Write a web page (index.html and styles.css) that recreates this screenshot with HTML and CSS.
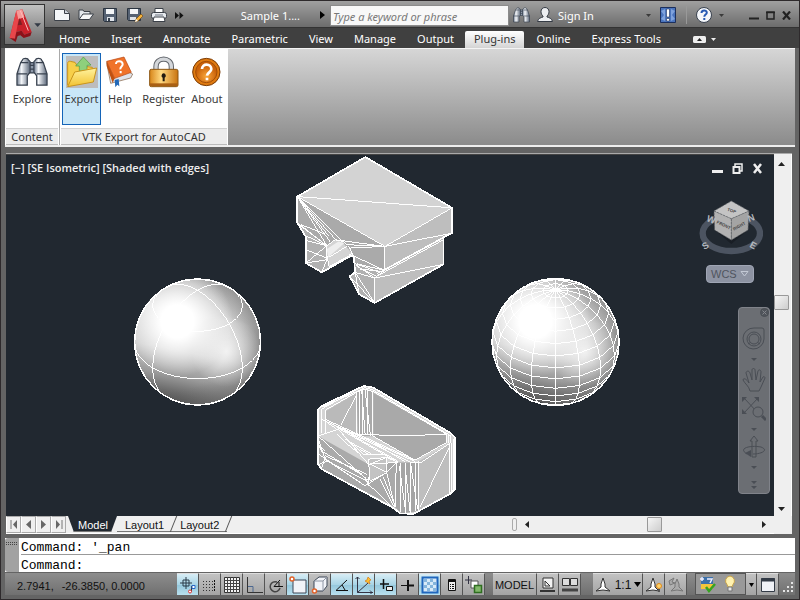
FILE: index.html
```html
<!DOCTYPE html>
<html lang="en">
<head>
    <meta charset="UTF-8">
    <meta name="viewport" content="width=device-width, initial-scale=1.0">
    <title>Sample 1</title>
    <link rel="stylesheet" href="styles.css">
</head>
<body>
<div class="app">

    <!-- Title bar and ribbon tabs -->
    <header class="header">
        <button class="app-button" aria-label="Application menu">
            <svg width="38" height="38" viewBox="0 0 114 114">
                <path d="M14 96 L34 14 L52 10 L80 78 L58 86 L50 74 L34 78 L30 98 Z" fill="#c9202a"/>
                <path d="M14 96 L34 14 L44 24 L30 98 Z" fill="#e8464a"/>
                <path d="M34 14 L52 10 L58 34 L40 40 Z" fill="#f59a98"/>
                <path d="M38 58 L44 36 L52 56 Z" fill="#7c2024"/>
                <path d="M14 96 L30 98 L34 78 L50 74 L58 86 L80 78 L76 90 L56 96 L46 88 L38 90 L32 108 Z" fill="#8c1119"/>
                <path d="M46 14 L70 74" stroke="#fbb" stroke-width="3"/>
                <path d="M88 52 h20 l-10 11z" fill="#333a45"/>
            </svg>
        </button>
        <div class="header-rows">
            <div class="titlebar">
                <div class="quick-access">
                    <button class="icon-btn" aria-label="New">
                        <svg width="16" height="16" viewBox="0 0 16 16"><path d="M.5 2.500h10l5 4v7H.5z" fill="#f4f6f8" stroke="#3b4048"/><path d="M10.500 2.500v4h5" fill="#cfd5dd" stroke="#3b4048"/></svg>
                    </button>
                    <button class="icon-btn" aria-label="Open">
                        <svg width="16" height="16" viewBox="0 0 16 16"><path d="M1 12V3h4l1 1.500h6V7" fill="#e3e7ec" stroke="#3b4048"/><path d="M1 12.500L5 7h10.500l-4 5.500z" fill="#f6f7f9" stroke="#3b4048"/></svg>
                    </button>
                    <button class="icon-btn" aria-label="Save">
                        <svg width="16" height="16" viewBox="0 0 16 16"><path d="M1.500 1.500h13v13h-12l-1-1z" fill="#566273" stroke="#2b3440"/><path d="M4 2h8v5H4z" fill="#f4f6f8"/><path d="M5 10h7v4H5z" fill="#dfe4ea"/><path d="M6 11h2v3H6z" fill="#39434f"/></svg>
                    </button>
                    <button class="icon-btn" aria-label="Save as">
                        <svg width="17" height="16" viewBox="0 0 17 16"><path d="M1.500 1.500h13v12h-12l-1-1z" fill="#566273" stroke="#2b3440"/><path d="M4 2h8v5H4z" fill="#f4f6f8"/><path d="M4 10h6v3H4z" fill="#dfe4ea"/><path d="M9 15l1-3 5-5 2 2-5 5z" fill="#f3b23e" stroke="#7a4d10" stroke-width=".7"/><path d="M9 15l1-3 2 2z" fill="#fff"/></svg>
                    </button>
                    <button class="icon-btn" aria-label="Plot">
                        <svg width="16" height="16" viewBox="0 0 16 16"><path d="M4 6V1.500h8V6" fill="#fff" stroke="#3b4048"/><rect x=".5" y="5.500" width="15" height="6" rx="2" fill="#e7eaee" stroke="#3b4048"/><path d="M3 10h10l1 4.500H2z" fill="#fff" stroke="#3b4048"/><path d="M4 8h8" stroke="#6c7480"/></svg>
                    </button>
                    <button class="icon-btn" aria-label="More">
                        <svg width="9" height="7" viewBox="0 0 9 7"><path d="M0 0l4 3.500L0 7zM4.500 0l4 3.500-4 3.500z" fill="#111"/></svg>
                    </button>
                </div>
                <span class="doc-title">Sample 1....</span>
                <svg class="title-arrow" width="5" height="8" viewBox="0 0 5 8"><path d="M0 0l5 4-5 4z" fill="#000"/></svg>
                <input class="search" type="text" aria-label="Search" placeholder="Type a keyword or phrase">
                <button class="icon-btn search-btn" aria-label="Find">
                    <svg width="17" height="16" viewBox="0 0 34 32"><use href="#binoculars"/></svg>
                </button>
                <button class="sign-in">
                    <svg width="16" height="16" viewBox="0 0 16 16"><path d="M8 .500c2.500 0 4 1.800 4 4.200 0 2-1 3.500-2 4.300v1c2 .5 5 1.500 5.500 4.500H.5C1 11.500 4 10.500 6 10V9C5 8.200 4 6.700 4 4.700 4 2.300 5.500.500 8 .500z" fill="#eceef1" stroke="#343a44"/></svg>
                    Sign In
                    <svg class="caret" width="5" height="3" viewBox="0 0 5 3"><path d="M0 0h5L2.500 3z" fill="#3a3a3a"/></svg>
                </button>
                <button class="icon-btn exchange" aria-label="Exchange">
                    <svg width="16" height="16" viewBox="0 0 16 16"><path d="M.5.500h15v15H.5z" fill="#4a74bd" stroke="#1c2f5d"/><path d="M1 4l4-2v12l-4-2 3-4zM15 4l-4-2v12l4-2-3-4z" fill="#7fa2dd"/><path d="M6.500 2h3v8h-3zM6.500 11.500h3V14h-3z" fill="#fff" stroke="#1c2f5d" stroke-width=".6"/></svg>
                </button>
                <span class="title-sep"></span>
                <button class="icon-btn help" aria-label="Help menu">
                    <svg width="29" height="16" viewBox="0 0 29 16"><circle cx="8" cy="8" r="7.500" fill="#f4f6fa" stroke="#39424f"/><path d="M5.500 6c0-3.500 5.300-3.300 5.300-.3 0 1.800-2.500 2-2.500 4M8.300 11v2" fill="none" stroke="#2759b3" stroke-width="2"/><path d="M23 7h5l-2.500 3z" fill="#3a3a3a"/></svg>
                </button>
                <div class="window-controls">
                    <button class="icon-btn" aria-label="Minimize"><svg width="10" height="9" viewBox="0 0 10 9"><path d="M0 7.500h10" stroke="#222" stroke-width="2"/></svg></button>
                    <button class="icon-btn" aria-label="Maximize"><svg width="9" height="9" viewBox="0 0 9 9"><path d="M1 8V1h7v7z M0 1.500h9" fill="none" stroke="#222" stroke-width="1.500"/></svg></button>
                    <button class="icon-btn" aria-label="Close"><svg width="9" height="9" viewBox="0 0 9 9"><path d="M1 .500l7 8M8 .500l-7 8" stroke="#222" stroke-width="2.200"/></svg></button>
                </div>
            </div>

            <nav class="tabs">
                <button class="tab">Home</button>
                <button class="tab">Insert</button>
                <button class="tab">Annotate</button>
                <button class="tab">Parametric</button>
                <button class="tab">View</button>
                <button class="tab">Manage</button>
                <button class="tab">Output</button>
                <button class="tab active">Plug-ins</button>
                <button class="tab">Online</button>
                <button class="tab">Express Tools</button>
                <button class="icon-btn ribbon-toggle" aria-label="Minimize ribbon">
                    <svg width="23" height="7" viewBox="0 0 23 7"><rect width="13" height="7" rx="1.500" fill="#eee"/><path d="M4 5l2.500-3L9 5z" fill="#222"/><path d="M18 2h5l-2.500 3z" fill="#eee"/></svg>
                </button>
            </nav>
        </div>
    </header>

    <!-- Ribbon -->
    <section class="ribbon">
        <div class="panel">
            <div class="panel-body">
                <button class="tool">
                    <svg width="32" height="32" viewBox="0 0 34 32">
                        <defs>
                            <linearGradient id="steel"><stop offset="0" stop-color="#6f7c90"/><stop offset=".35" stop-color="#f5f7fa"/><stop offset="1" stop-color="#5b6779"/></linearGradient>
                        </defs>
                        <g id="binoculars" stroke="#39424f" stroke-width="1.300">
                            <path d="M14 6h6v11h-6z" fill="#8c97a8"/>
                            <path d="M7 3c0-2 6-2 6 0l2 2v11l-3 4v10H1V18L5 6z" fill="url(#steel)"/>
                            <path d="M27 3c0-2-6-2-6 0l-2 2v11l3 4v10h11V18L29 6z" fill="url(#steel)"/>
                            <path d="M1 18h11M22 18h11M5 6h8M21 6h8M15 9h4M15 13h4" fill="none"/>
                        </g>
                    </svg>
                    <span>Explore</span>
                </button>
            </div>
            <div class="panel-title">Content</div>
        </div>
        <div class="panel wide">
            <div class="panel-body">
                <button class="tool selected">
                    <svg width="32" height="32" viewBox="0 0 96 96">
                        <defs><linearGradient id="folder" x2="0" y2="1"><stop offset="0" stop-color="#fff3a0"/><stop offset="1" stop-color="#f2c230"/></linearGradient></defs>
                        <path d="M0 0h96v96H0z" fill="#bdbdbd"/>
                        <path d="M5 88V22c0-5 4-7 8-6l14 3 6 9 46 6v14" fill="#f7cf49" stroke="#c9951c" stroke-width="3"/>
                        <path d="M52 3l23 24-12 1v17H40V30H29z" fill="#8ed07c" stroke="#4d9c42" stroke-width="2"/>
                        <path d="M5 92L26 48l66-12-10 42z" fill="url(#folder)" stroke="#c9951c" stroke-width="3"/>
                    </svg>
                    <span>Export</span>
                </button>
                <button class="tool">
                    <svg width="32" height="32" viewBox="0 0 96 96">
                        <path d="M8 20l12 62 60-16 6-12-8-4z" fill="#dfe3ea" stroke="#7d5a3c" stroke-width="2"/>
                        <path d="M8 16L60 3l22 46-50 18z" fill="#f0732a" stroke="#b3430f" stroke-width="2"/>
                        <path d="M8 16l24 51-6 14L8 30z" fill="#c2500f"/>
                        <path d="M36 24c0-12 20-11 20 1 0 7-8 6-7 15M50 45v7" stroke="#fff" stroke-width="6" fill="none"/>
                        <path d="M32 72l12-3 2 22-6-5-6 8z" fill="#2268b8"/>
                    </svg>
                    <span>Help</span>
                </button>
                <button class="tool">
                    <svg width="32" height="32" viewBox="0 0 96 96">
                        <defs><linearGradient id="gold"><stop offset="0" stop-color="#d8861a"/><stop offset=".4" stop-color="#ffd980"/><stop offset="1" stop-color="#c9730f"/></linearGradient></defs>
                        <path d="M24 44V32C24 2 70 2 70 32v12" fill="none" stroke="#63676d" stroke-width="16"/>
                        <path d="M24 44V32C24 2 70 2 70 32v12" fill="none" stroke="#d4d7db" stroke-width="10"/>
                        <rect x="5" y="40" width="85" height="52" rx="5" fill="url(#gold)" stroke="#8b5614" stroke-width="3"/>
                        <path d="M6 82h83v8H6z" fill="#a96014"/>
                        <path d="M47 52a7 7 0 0 1 3 13v11h-6V65a7 7 0 0 1 3-13z" fill="#221a10"/>
                    </svg>
                    <span>Register</span>
                </button>
                <button class="tool">
                    <svg width="32" height="32" viewBox="0 0 96 96">
                        <defs><radialGradient id="amber" cy=".7"><stop offset="0" stop-color="#f9a63a"/><stop offset="1" stop-color="#c9610a"/></radialGradient></defs>
                        <circle cx="46" cy="48" r="41" fill="#df7a10" stroke="#7a3c08" stroke-width="3"/>
                        <circle cx="46" cy="48" r="32" fill="url(#amber)" stroke="#a34e08" stroke-width="3"/>
                        <path d="M33 39c0-18 28-17 28 0 0 10-12 10-13 20M48 65v8" stroke="#fff" stroke-width="8" fill="none"/>
                    </svg>
                    <span>About</span>
                </button>
            </div>
            <div class="panel-title">VTK Export for AutoCAD</div>
        </div>
    </section>

    <!-- Drawing window -->
    <main class="workspace">
        <div class="viewport">
            <svg class="scene" viewBox="6 155 768 362">
                <defs>
                    <linearGradient id="ball" x1=".6" y1="0" x2=".4" y2="1">
                        <stop offset="0" stop-color="#a8a8a8"/><stop offset=".3" stop-color="#d6d6d6"/><stop offset=".6" stop-color="#c8c8c8"/><stop offset=".8" stop-color="#9a9a9a"/><stop offset="1" stop-color="#4c4c4c"/>
                    </linearGradient>
                    <radialGradient id="edge" cx=".32" cy=".45" r=".72">
                        <stop offset=".6" stop-color="#777" stop-opacity="0"/><stop offset=".95" stop-color="#6e6e6e" stop-opacity=".7"/>
                    </radialGradient>
                    <radialGradient id="shine" cx=".34" cy=".34" r=".44">
                        <stop offset=".3" stop-color="#fff"/><stop offset="1" stop-color="#fff" stop-opacity="0"/>
                    </radialGradient>
                    <radialGradient id="glow" cx=".73" cy=".58" r=".28">
                        <stop offset="0" stop-color="#fff" stop-opacity=".75"/><stop offset="1" stop-color="#fff" stop-opacity="0"/>
                    </radialGradient>
                    <g id="shaded-ball">
                        <circle r="63" fill="url(#ball)"/>
                        <circle r="63" fill="url(#edge)"/>
                        <circle r="63" fill="url(#glow)"/>
                        <circle r="63" fill="url(#shine)"/>
                    </g>
                </defs>

                <use href="#shaded-ball" x="197" y="342"/>
                <path id="solidSphere" class="edge"/>
                <use href="#shaded-ball" x="556" y="342"/>
                <path id="meshSphere" class="edge"/>

                <!-- bracket -->
                <svg x="285" y="150" width="180" height="160" viewBox="0 0 540 480">
                    <path d="M241 21L502 174V250L476 262V344L269 460 222 434 194 380 210 368 206 320 198 318 110 368 62 340V262L36 218V140Z" fill="#bebebe"/>
                    <path d="M36 140L300 290 298 362 210 342 194 300 150 270 125 288 36 218Z" fill="#aaa"/>
                    <path d="M36 218L125 288 128 350 110 368 62 340V262ZM210 342L298 362 269 385V460L222 434 194 380 210 368Z" fill="#b1b1b1"/>
                    <path d="M125 288L150 270 172 276 205 318 132 352Z" fill="#d4d4d4"/>
                    <path d="M125 298L160 275 178 280 128 324Z" fill="#eee"/>
                    <path d="M241 21L502 174 300 290 36 140Z" fill="#d3d3d3"/>
                    <g class="mesh">
                        <path d="M241 21L502 174V250L476 262V344L269 460 222 434 194 380 210 368 206 320 198 318 110 368 62 340V262L36 218V140Z" class="outline"/>
                        <path d="M36 140L300 290 502 174ZM300 290L298 362M269 385V460M300 290L502 250M269 385L476 344M269 385L298 362 502 250M275 380L476 270M275 372L476 262M215 342L298 362"/>
                        <path d="M36 140L125 288M36 140L135 276M36 140L152 270M36 140L172 274M190 285L300 290M36 140L130 258M150 270L300 290M195 295L300 290M205 318L298 362M36 218L125 288M42 225L125 288M48 225L118 252M62 258L125 288M62 272L125 288"/>
                        <path d="M125 288V330L110 368M125 288L150 270 175 275 190 288 206 320M62 340L125 288M62 340L125 330 110 368M62 300L125 325M125 315L132 350M132 322L185 290M130 350L204 310"/>
                        <path d="M210 342L285 368M215 350L275 380M210 368L269 385M210 368L269 460M210 368L222 434M194 380L269 460M212 345L269 385 298 362M225 358L290 365"/>
                    </g>
                </svg>

                <!-- open box -->
                <svg x="305" y="375" width="165" height="150" viewBox="0 0 495 450">
                    <path d="M160 42L178 35 205 40 435 175 450 190V345L435 360 325 420 285 418 265 402 50 285 38 270V105L50 95Z" fill="#d4d4d4"/>
                    <path d="M155 55L60 112V138L155 182Z" fill="#bababa"/>
                    <path d="M155 52L180 45 205 52V186H158Z" fill="#aaa"/>
                    <path d="M205 55L425 180V207L330 258 205 186Z" fill="#a9a9a9"/>
                    <path d="M38 185L190 270 275 265 270 400 50 285 38 270Z" fill="#aaa"/>
                    <path d="M275 265H340V412L290 418 270 400Z" fill="#a5a5a5"/>
                    <path d="M340 262L440 205V355L340 412Z" fill="#bebebe"/>
                    <path d="M190 255L245 250 240 295 195 320Z" fill="#c3c3c3"/>
                    <g class="mesh">
                        <path class="outline" d="M160 42L178 35 205 40 435 175 450 190V345L435 360 325 420 285 418 265 402 50 285 38 270V105L50 95Z"/>
                        <path d="M158 52L60 108V135L330 258 425 205V180L205 52 180 44ZM152 47L50 104V135L320 266 350 264 438 205V185L200 45M52 98L180 40 202 46M162 182H205L315 184 425 180M205 186L330 258M155 55V182M162 50V180M172 48V182M188 48V182M202 52V185M108 152L155 60"/>
                        <path d="M170 48L180 180M180 48L196 184M425 180V207M431 178V205M440 205V355M434 210V360M446 195V350M345 400L435 215M340 262V412M332 265V412M318 268V418M303 268V418M288 266V415M274 265L270 400M283 275L300 400M300 275L315 410M318 275L338 405"/>
                        <path d="M38 185L100 165 190 270 275 265M38 185L190 320M60 135V180M50 130V175M60 140L95 165M95 160L170 185 300 262M105 165L270 260M120 170L280 262M95 155L330 262M100 165L165 240M110 180L175 240 245 240M120 195L200 240M95 180L120 205 165 240M165 225L190 240M190 255L245 250V295L195 320ZM195 270L245 295M195 270L245 250 280 265"/>
                        <path d="M40 195L60 255 180 335 245 295 270 400M40 240L180 335M48 230L170 300M60 245L185 300M70 265L190 325M48 285L60 250M42 270L70 260M180 310L190 335M190 310V335M235 310L270 395M225 315L265 395M190 330L265 402M240 300L275 265M38 205L48 230M40 215L60 230M100 260L175 305"/>
                    </g>
                </svg>
            </svg>

            <div class="view-label">[−] [SE Isometric] [Shaded with edges]</div>
            <div class="view-controls">
                <button class="icon-btn" aria-label="Minimize view"><svg width="11" height="11" viewBox="0 0 11 11"><path d="M0 8.500h11" stroke="#eee" stroke-width="3"/></svg></button>
                <button class="icon-btn" aria-label="Restore view"><svg width="11" height="11" viewBox="0 0 11 11"><path d="M3 3V1h7v7H8" fill="none" stroke="#eee" stroke-width="1.500"/><path d="M1.500 4h6v6h-6z" fill="none" stroke="#eee" stroke-width="2"/></svg></button>
                <button class="icon-btn" aria-label="Close view"><svg width="11" height="11" viewBox="0 0 11 11"><path d="M2 1l7 9M9 1L2 10" stroke="#eee" stroke-width="2.500"/></svg></button>
            </div>

            <svg class="view-cube" width="64" height="56" viewBox="26 150 192 168">
                <ellipse cx="123" cy="250" rx="86" ry="53" fill="none" stroke="#4c5461" stroke-width="19"/>
                <path d="M71 183L123 206 176 183 173 240 123 282 73 240Z" fill="#191e25"/>
                <path d="M123 153L176 183 123 206 71 183Z" fill="#c4c4c4"/>
                <path d="M71 183L123 206V270L73 240Z" fill="#b2b2b2"/>
                <path d="M176 183L123 206V270L173 240Z" fill="#a4a4a4"/>
                <path d="M71 183L123 206 176 183M123 206V270M123 153L176 183 173 240 123 270 73 240 71 183Z" fill="none" stroke="#5b5f64" stroke-width="2" stroke-dasharray="7 3"/>
                <g class="cube-text">
                    <text x="110" y="182" transform="rotate(18 110 182)">TOP</text>
                    <text x="78" y="219" transform="rotate(26 78 219)">FRONT</text>
                    <text x="131" y="242" transform="rotate(-29 131 242)">RIGHT</text>
                </g>
                <g class="compass-text">
                    <text x="42" y="300" transform="rotate(-30 42 300)">S</text>
                    <text x="176" y="290" transform="rotate(28 176 290)">E</text>
                    <text x="47" y="213" transform="rotate(20 47 213)">W</text>
                    <text x="176" y="216" transform="rotate(-20 176 216)">N</text>
                </g>
            </svg>
            <button class="wcs">WCS <svg width="9" height="6" viewBox="0 0 9 6"><path d="M1 .500h7L4.500 5z" fill="none" stroke="#c3c9d5"/></svg></button>

            <div class="nav-bar">
                <button class="icon-btn nav-close" aria-label="Close navigation bar"><svg width="9" height="9" viewBox="0 0 9 9"><circle cx="4.500" cy="4.500" r="4" fill="#50545b"/><path d="M2.500 2.500l4 4M6.500 2.500l-4 4" stroke="#83868b"/></svg></button>
                <button class="icon-btn nav-wheel" aria-label="Steering wheel"><svg width="24" height="36" viewBox="0 0 24 36"><path d="M12 1h8q2 0 2 2v9A10.500 10.500 0 1 1 12 1z"/><circle cx="12" cy="12" r="7"/><circle cx="12" cy="12" r="5"/><path d="M6 17l2.500-1.500M18 17l-2.500-1.500"/><path d="M9 31h6l-3 3z" class="solid"/></svg></button>
                <button class="icon-btn nav-pan" aria-label="Pan"><svg width="24" height="25" viewBox="0 0 24 25"><path d="M8 23c-1-5-5-7-7-11 0-2 3-2 6 3L4 5c0-2 3-3 4 0l2 7V2c0-2 3-2 3 0l1 10 2-9c1-2 3-1 3 1l-1 10 3-5c1-1 2 0 2 1l-4 9-2 4z"/></svg></button>
                <button class="icon-btn nav-zoom" aria-label="Zoom"><svg width="24" height="36" viewBox="0 0 24 36"><path d="M2 2l14 15M16 2L2 17"/><path d="M0 1h5L0 6zM17 1v5l-5-5zM0 18v-5l5 5z" class="solid"/><circle cx="16" cy="16" r="5" fill="#6b6e73"/><path d="M20 20l4 4" stroke-width="3"/><path d="M9 32h6l-3 3z" class="solid"/></svg></button>
                <button class="icon-btn nav-orbit" aria-label="Orbit"><svg width="24" height="34" viewBox="0 0 24 34"><path d="M10 22V6H8l4-5 4 5h-2v16z"/><path d="M5 19c-10-6 4-9 14-7 8 3 1 7-8 7"/><path d="M9 15v7l-6-4z" class="solid"/><path d="M9 31h6l-3 3z" class="solid"/></svg></button>
                <button class="icon-btn nav-more" aria-label="Customize"><svg width="24" height="12" viewBox="0 0 24 12"><path d="M9 2h6l-3 3zM9 7h6l-3 3z" class="solid"/></svg></button>
            </div>
        </div>

        <div class="v-scroll">
            <button class="arrow" aria-label="Scroll up"><svg width="7" height="4" viewBox="0 0 7 4"><path d="M0 4h7L3.500 0z"/></svg></button>
            <span class="thumb"></span>
            <button class="arrow" aria-label="Scroll down"><svg width="7" height="4" viewBox="0 0 7 4"><path d="M0 0h7L3.500 4z"/></svg></button>
        </div>

        <div class="layout-bar">
            <button class="step" aria-label="First layout"><svg width="8" height="9" viewBox="0 0 8 9"><path d="M1 0v9" /><path d="M7 0v9L3 4.500z" class="solid"/></svg></button>
            <button class="step" aria-label="Previous layout"><svg width="5" height="9" viewBox="0 0 5 9"><path d="M5 0v9L0 4.500z" class="solid"/></svg></button>
            <button class="step" aria-label="Next layout"><svg width="5" height="9" viewBox="0 0 5 9"><path d="M0 0v9l5-4.500z" class="solid"/></svg></button>
            <button class="step" aria-label="Last layout"><svg width="8" height="9" viewBox="0 0 8 9"><path d="M7 0v9"/><path d="M1 0v9l4-4.500z" class="solid"/></svg></button>
            <button class="layout-tab current">Model</button>
            <button class="layout-tab">Layout1</button>
            <button class="layout-tab">Layout2</button>
            <div class="h-scroll">
                <span class="splitter"></span>
                <button class="arrow" aria-label="Scroll left"><svg width="4" height="7" viewBox="0 0 4 7"><path d="M4 0v7L0 3.500z"/></svg></button>
                <span class="thumb"></span>
                <button class="arrow" aria-label="Scroll right"><svg width="4" height="7" viewBox="0 0 4 7"><path d="M0 0v7l4-3.500z"/></svg></button>
            </div>
        </div>
        <span class="scroll-corner"></span>
    </main>

    <!-- Command line -->
    <section class="command">
        <span class="grip"></span>
        <div class="command-lines">
            <div class="history">Command: '_pan</div>
            <div class="prompt"><label for="cmd">Command:</label><input id="cmd" type="text"></div>
        </div>
    </section>

    <!-- Status bar -->
    <footer class="status">
        <span class="coords"><span>2.7941,</span><span>-26.3850, 0.0000</span></span>
        <div class="toggles">
            <button class="toggle on" aria-label="Infer constraints"><svg width="18" height="18" viewBox="0 0 18 18"><path d="M1 7h12M7 1v12M4 4h6v6H4z" stroke="#2a3a48"/><path d="M12.500 16v-6" stroke="#333"/><circle cx="11" cy="15.500" r="1.500" fill="#fff" stroke="#d33"/><path d="M13 9.500h3v3h-3z" fill="#fff" stroke="#2868c8"/></svg></button>
            <button class="toggle" aria-label="Snap"><svg width="18" height="18" viewBox="0 0 18 18"><path d="M2 5.500h10M2 8.500h10M2 11.500h10M2 14.500h10" stroke="#333" stroke-dasharray="1 2"/><path d="M13.500 4v11" stroke="#111" stroke-dasharray="2 1"/></svg></button>
            <button class="toggle" aria-label="Grid"><svg width="18" height="18" viewBox="0 0 18 18"><path d="M1.500 1.500h15v15h-15z" fill="#f4f4f4" stroke="#333"/><path d="M1 4.500h16M1 7.500h16M1 10.500h16M1 13.500h16M4.500 1v16M7.500 1v16M10.500 1v16M13.500 1v16" stroke="#444"/></svg></button>
            <button class="toggle" aria-label="Ortho"><svg width="18" height="18" viewBox="0 0 18 18"><path d="M2.500 1v15.500H18" stroke="#333"/><path d="M3 10.500h5V16" stroke="#4c6890"/></svg></button>
            <button class="toggle" aria-label="Polar"><svg width="18" height="18" viewBox="0 0 18 18"><path d="M13 12a5 5 0 1 1-3-6" stroke="#444" stroke-width="1.500"/><path d="M13 4l-6 6.500h9M12 6v4" stroke="#111"/></svg></button>
            <button class="toggle on" aria-label="Object snap"><svg width="18" height="18" viewBox="0 0 18 18"><path d="M4 4h13v13H4z" fill="#f1f3f8" stroke="#3c4756"/><circle cx="3" cy="3" r="2" fill="#fff" stroke="#e2632a" stroke-width="1.500"/></svg></button>
            <button class="toggle" aria-label="3D object snap"><svg width="18" height="18" viewBox="0 0 18 18"><path d="M3 5l5-4h8v9l-4 5H3z" fill="#f1f3f8" stroke="#3c4756"/><path d="M3 5h9v10M12 5l4-4" stroke="#8e96a4"/><circle cx="3.500" cy="15" r="2" fill="#fff" stroke="#e2632a" stroke-width="1.500"/></svg></button>
            <button class="toggle on" aria-label="Object tracking"><svg width="18" height="18" viewBox="0 0 18 18"><path d="M14 4L3 14.500h12M9 9l3 5" stroke="#111"/></svg></button>
            <button class="toggle on" aria-label="Dynamic UCS"><svg width="18" height="18" viewBox="0 0 18 18"><path d="M2.500 1v15.500H18M2.500 16.500L13 7M.5 3l2-2 2 2M15 14.500l2 2-2 2" stroke="#334"/><path d="M13 1l3 3-2 1 1 3-5-3 2-1z" fill="#ffc02e" stroke="#d97813" stroke-width=".7"/></svg></button>
            <button class="toggle on" aria-label="Dynamic input"><svg width="18" height="18" viewBox="0 0 18 18"><path d="M3 8h9M6.500 3v10" stroke="#111" stroke-width="1.500"/><path d="M9.500 10.500h6v4h-6z" fill="#eee" stroke="#111"/></svg></button>
            <button class="toggle" aria-label="Lineweight"><svg width="18" height="18" viewBox="0 0 18 18"><path d="M2 9.500h7" stroke="#111"/><path d="M9 4v11" stroke="#111" stroke-width="2"/><path d="M10 9.500h5" stroke="#111" stroke-width="2"/></svg></button>
            <button class="toggle on" aria-label="Transparency"><svg width="18" height="18" viewBox="0 0 18 18"><path d="M1.500 1.500h15v15h-15z" fill="#d8ebf8" stroke="#1f67bd" stroke-width="2"/><path d="M3 4.500h12M3 10.500h12" stroke="#85b6dc" stroke-width="3" stroke-dasharray="3 3"/><path d="M6 7.500h9M6 13.500h9" stroke="#85b6dc" stroke-width="3" stroke-dasharray="3 3"/></svg></button>
            <button class="toggle" aria-label="Quick properties"><svg width="18" height="18" viewBox="0 0 18 18"><path d="M5.500 3.500h7v11h-7z" fill="#eee" stroke="#111"/><path d="M5 5h8" stroke="#111" stroke-width="2"/><path d="M7 8.500h1M9 8.500h2M7 10.500h1M9 10.500h2M7 12.500h1M9 12.500h2" stroke="#111"/></svg></button>
            <button class="toggle" aria-label="Selection cycling"><svg width="18" height="18" viewBox="0 0 18 18"><path d="M0 4h7M3.500 0v8" stroke="#334"/><path d="M6 5h7v7H6z" fill="#fff" stroke="#555"/><path d="M9.500 9.500h7v7h-7z" fill="#82b86a" stroke="#2f6e20" stroke-width="1.500"/></svg></button>
        </div>
        <div class="toggles spaces">
            <button class="toggle model">MODEL</button>
            <button class="toggle" aria-label="Quick view layouts"><svg width="18" height="18" viewBox="0 0 18 18"><path d="M4 2h10v10H4z" fill="#f2f2f2" stroke="#333"/><path d="M6 5v5h5z" stroke="#333"/><path d="M1 15h15" stroke="#333" stroke-width="2"/></svg></button>
            <button class="toggle" aria-label="Quick view drawings"><svg width="18" height="18" viewBox="0 0 18 18"><path d="M1.500 2.500h7v7h-7zM9.500 2.500h7v7h-7z" fill="#ddd" stroke="#333"/><path d="M1 14h16" stroke="#444" stroke-width="3"/></svg></button>
        </div>
        <div class="toggles">
            <button class="toggle scale"><svg width="18" height="18" viewBox="0 0 18 18"><path d="M9 2l2 6v3l5 4-7-1-7 1 5-4V8z" fill="#fff" stroke="#333"/></svg>1:1<svg width="7" height="5" viewBox="0 0 7 5"><path d="M0 0h7L3.500 5z" fill="#000"/></svg></button>
            <button class="toggle" aria-label="Annotation visibility"><svg width="18" height="18" viewBox="0 0 18 18"><path d="M8 2l2 6v3l4 4-6-1-7 1 5-4V8z" fill="#fff" stroke="#333"/><circle cx="14" cy="10" r="2.500" fill="#ffd36b" stroke="#e08a1a"/><path d="M13 13h2v3h-2z" fill="#555"/></svg></button>
            <button class="toggle" aria-label="Auto scale"><svg width="18" height="18" viewBox="0 0 18 18"><path d="M10 3l2 5v3l4 4-6-1-6 1 4-4V8zM2 5l5-3-2 4 3 1-5 2z" fill="#aaa" stroke="#777"/></svg></button>
        </div>
        <div class="toggles tray">
            <button class="icon-btn" aria-label="Trusted drawing"><svg width="18" height="18" viewBox="0 0 18 18"><path d="M2 2h12v11H2z" fill="#3c70a9"/><path d="M2 9h12v5H2z" fill="#f4c53c"/><path d="M1 4h4M3 2v4M8 4h5l-2 4" stroke="#eef" stroke-width="1.500"/><path d="M7 12l3 4 6-7" stroke="#36a320" stroke-width="2.500"/></svg></button>
            <button class="icon-btn" aria-label="Tips"><svg width="18" height="18" viewBox="0 0 18 18"><path d="M9 1a5 5 0 0 1 3 8.500L11 12H7L6 9.500A5 5 0 0 1 9 1z" fill="#fff2b0" stroke="#c9a44a"/><path d="M7 12h4v4H7z" fill="#e6e6e6" stroke="#777"/></svg></button>
        </div>
        <button class="toggle narrow" aria-label="Status bar menu"><svg width="5" height="4" viewBox="0 0 5 4"><path d="M0 0h5L2.500 4z" fill="#000"/></svg></button>
        <button class="toggle" aria-label="Clean screen"><svg width="18" height="18" viewBox="0 0 18 18"><path d="M2.500 2.500h13v13h-13z" fill="#f0f2f7" stroke="#333b46"/><path d="M2 4h14" stroke="#333b46" stroke-width="3"/></svg></button>
        <svg class="resize" width="16" height="16" viewBox="0 0 16 16"><path d="M12 5h2M8 9h2M12 9h2M4 13h2M8 13h2M12 13h2" stroke="#e4e4e4" stroke-width="2"/></svg>
    </footer>
</div>
<script src="scene.js"></script>
</body>
</html>
```
FILE: styles.css
```css
* {
    box-sizing: border-box;
}

body {
    margin: 0;
    font-family: "Noto Sans", "Open Sans", sans-serif;
    font-size: 11px;
    color: #333;
}

button {
    font: inherit;
    color: inherit;
    border: none;
    padding: 0;
    background: none;
    cursor: pointer;
}

svg {
    display: block;
    flex: none;
}

.app {
    display: flex;
    flex-direction: column;
    height: 100vh;
    overflow: hidden;
    padding: 0 4px 4px;
    background: #646464;
    border: 1px solid #2e2a2c;
}

.icon-btn {
    display: flex;
    align-items: center;
    justify-content: center;
}

/* Header */
.header {
    display: flex;
    margin: 0 -4px;
    background: linear-gradient(#a0a0a0, #6c6c6c 26px, #333 26px, #333 27px, #404040 27px);
}

.app-button {
    width: 41px;
    height: 41px;
    margin: 3px 0 3px 3px;
    border: 1px solid #333;
    background: linear-gradient(#c2c2c2, #6d6d6d);
}

.header-rows {
    flex: 1;
    min-width: 0;
}

.titlebar {
    display: flex;
    align-items: center;
    height: 28px;
    padding: 0 8px 0 9px;
    color: #fff;
}

.quick-access {
    display: flex;
    align-items: center;
    gap: 8px;
}

.doc-title {
    flex: 1;
    text-align: right;
    padding-right: 20px;
    white-space: nowrap;
}

.title-arrow {
    margin-right: 5px;
}

.search {
    width: 179px;
    height: 21px;
    padding: 2px 2px 0;
    border: 1px solid #8c8c8c;
    background: #f8f8f8;
    font: italic 11px "Noto Sans", "Open Sans", sans-serif;
}

.search::placeholder {
    color: #777;
}

.search-btn {
    margin: 0 7px 0 4px;
}

.sign-in {
    display: flex;
    align-items: center;
    gap: 5px;
    width: 114px;
}

.sign-in .caret {
    margin-left: auto;
}

.exchange {
    margin: 0 10px 0 9px;
}

.title-sep {
    width: 1px;
    height: 18px;
    background: #999;
    margin-right: 9px;
}

.window-controls {
    display: flex;
    gap: 7px;
    margin-left: 24px;
}

.tabs {
    display: flex;
    align-items: flex-end;
    height: 19px;
    padding-left: 4px;
}

.tab {
    height: 17px;
    padding: 0 11px 2px 10px;
    line-height: 15px;
    color: #fff;
    white-space: nowrap;
}

.tab.active {
    padding: 0 9px 2px;
    background: linear-gradient(#fff, #d4d4d4);
    color: #333;
    border-radius: 2px 2px 0 0;
}

.tab.active + .tab {
    padding-left: 12px;
}

.ribbon-toggle {
    height: 17px;
    margin-left: 21px;
}

/* Ribbon */
.ribbon {
    display: flex;
    height: 99px;
    flex: none;
    border-bottom: 2px solid #eee;
    border-top: 1px solid #f4f4f4;
    background: linear-gradient(#d6d6d6, #8b8b8b);
}

.panel {
    display: flex;
    flex-direction: column;
    width: 55px;
    padding: 0 1px;
    background: #fff;
    border-right: 1px solid #a9a9a9;
}

.panel.wide {
    width: 168px;
    border-right: none;
}

.panel-body {
    display: flex;
    flex: 1;
    padding: 4px 1px 3px;
}

.tool {
    display: flex;
    flex-direction: column;
    align-items: center;
    flex: 1 1 auto;
    padding: 3px 0;
    line-height: 22px;
    color: #3b3b3b;
}

.tool.selected {
    flex: 0 0 39px;
    padding: 2px 0;
    border: 1px solid #1464b8;
    background: #c9e7f8;
}

.panel-title {
    height: 17px;
    line-height: 16px;
    text-align: center;
    background: #ececec;
    border-top: 1px solid #d2d2d2;
    border-bottom: 1px solid #bbb;
    white-space: nowrap;
}

/* Drawing window */
.workspace {
    display: grid;
    grid-template-columns: 1fr 18px;
    grid-template-rows: 1fr 18px;
    flex: 1;
    min-height: 0;
    margin: 6px 3px 4px 1px;
    border-top: 1px solid #aaa;
}

.viewport {
    position: relative;
    min-height: 0;
    overflow: hidden;
    background: #212830;
    border-top: 1px solid #444;
}

.scene {
    width: 100%;
    height: 100%;
}

.edge {
    fill: none;
    stroke: #fff;
    stroke-width: 1;
    shape-rendering: crispEdges;
}

.mesh {
    fill: none;
    stroke: #fff;
    stroke-width: 3;
    shape-rendering: crispEdges;
}

.mesh .outline {
    stroke-width: 5;
}

.view-label {
    position: absolute;
    left: 5px;
    top: 4px;
    font: 600 11px "Open Sans", "Noto Sans", sans-serif;
    line-height: 18px;
    color: #eee;
}

.view-controls {
    position: absolute;
    right: 11px;
    top: 8px;
    display: flex;
    gap: 9px;
}

.view-cube {
    position: absolute;
    right: 11px;
    top: 45px;
}

.cube-text {
    font: bold 13px "Liberation Sans", sans-serif;
    fill: #444;
}

.compass-text {
    font: bold 28px "Liberation Sans", sans-serif;
    fill: #b5b9bf;
}

.wcs {
    position: absolute;
    right: 20px;
    top: 110px;
    display: flex;
    align-items: center;
    justify-content: space-between;
    width: 48px;
    height: 18px;
    padding: 0 4px;
    border: 1px solid #a0a6b5;
    border-radius: 4px;
    background: #8d93a2;
    color: #50555f;
    font: 11px "Liberation Sans", sans-serif;
}

.nav-bar {
    position: absolute;
    right: 4px;
    top: 152px;
    display: flex;
    flex-direction: column;
    align-items: center;
    width: 32px;
    height: 187px;
    border: 1px solid #80838a;
    border-radius: 4px;
    background: #6b6e73;
}

.nav-bar svg {
    fill: none;
    stroke: #4a4e55;
}

.nav-bar .solid {
    fill: #4a4e55;
    stroke: none;
}

.nav-close {
    align-self: flex-end;
    margin-bottom: 10px;
}

.nav-wheel {
    margin-bottom: 5px;
}

.nav-pan {
    margin-bottom: 3px;
}

.nav-zoom {
    margin-bottom: 3px;
}

.nav-orbit {
    margin-bottom: 10px;
}

.v-scroll {
    display: flex;
    flex-direction: column;
    align-items: center;
    justify-content: space-between;
    padding: 8px 2px 5px 0;
    background: #efefef;
    border-right: 1px solid #fff;
}

.arrow svg {
    fill: #222;
}

.thumb {
    width: 15px;
    height: 15px;
    border: 1px solid #999;
    border-radius: 1px;
    background: linear-gradient(135deg, #f6f6f6, #cdcdcd);
}

.v-scroll .thumb {
    margin-bottom: 68px;
}

.layout-bar {
    display: flex;
    background: #efefef;
    border-bottom: 1px solid #fff;
    font: 11px "Liberation Sans", Arial, sans-serif;
    color: #111;
}

.step {
    display: flex;
    align-items: center;
    justify-content: center;
    width: 15px;
    border: 1px solid #aaa;
    border-left-color: #fff;
}

.step svg {
    stroke: #777;
}

.step .solid {
    fill: #666;
    stroke: none;
}

.layout-tab {
    position: relative;
    height: 16px;
    padding: 3px 8px 0;
    border-bottom: 1px solid #777;
    line-height: 12px;
}

.layout-tab::after {
    content: "";
    position: absolute;
    right: -2px;
    top: 0;
    width: 1px;
    height: 16px;
    background: #555;
    transform: skewX(-22deg);
}

.layout-tab.current {
    margin-left: 2px;
    padding: 3px 9px 0 10px;
    background: #212830;
    color: #fff;
    clip-path: polygon(0 0, 100% 0, 88% 100%, 12% 100%);
}

.h-scroll {
    display: flex;
    align-items: center;
    justify-content: space-between;
    width: 262px;
    margin-left: auto;
    padding-right: 8px;
}

.splitter {
    width: 5px;
    height: 13px;
    border: 1px solid #aaa;
    border-radius: 2px;
}

.h-scroll .arrow {
    margin-left: 8px;
}

.h-scroll .splitter + .arrow {
    margin-right: auto;
}

.h-scroll .thumb {
    margin-right: 92px;
}

.scroll-corner {
    background: #efefef;
}

/* Command line */
.command {
    display: flex;
    flex: none;
    height: 34px;
    background: #fff;
    font: 13px "Liberation Mono", monospace;
    color: #000;
}

.grip {
    width: 14px;
    background:
        repeating-linear-gradient(90deg, #444 0 1px, transparent 1px 2px) 1px 4px / 12px 1px no-repeat,
        repeating-linear-gradient(90deg, #444 0 1px, transparent 1px 2px) 1px 6px / 12px 1px no-repeat,
        #a2a2a2;
    border-radius: 3px 0 0 3px;
}

.command-lines {
    flex: 1;
    padding-left: 2px;
}

.history {
    height: 17px;
    line-height: 20px;
    border-bottom: 1px solid #999;
}

.prompt {
    display: flex;
    height: 17px;
    line-height: 22px;
}

.prompt input {
    flex: 1;
    height: 17px;
    border: none;
    outline: none;
    font: inherit;
    background: transparent;
}

/* Status bar */
.status {
    display: flex;
    flex: none;
    height: 22px;
    margin-top: 1px;
    background: linear-gradient(#8d8d8d, #707070);
    font: 12px "Liberation Sans", Arial, sans-serif;
    color: #111;
}

.coords {
    display: flex;
    gap: 8px;
    flex: 1;
    padding-left: 12px;
    line-height: 26px;
    font-size: 11px;
    white-space: nowrap;
}

.toggles {
    display: flex;
    margin-right: 8px;
}

.toggles.spaces {
    margin-right: 12px;
}

.toggle {
    display: flex;
    align-items: center;
    justify-content: center;
    width: 22px;
    height: 22px;
    border-right: 1px solid #555;
    border-top: 1px solid #ddd;
    background: linear-gradient(#c2c2c2, #a4a4a4);
}

.toggles svg {
    fill: none;
}

.toggle.on {
    background: linear-gradient(#d8edf5, #a9d5e6 50%, #92c6db 50%, #b9e0ee);
}

.toggle.model {
    width: 44px;
    font-size: 11px;
}

.toggle.scale {
    width: 50px;
    gap: 3px;
}

.toggle.narrow {
    width: 11px;
}

.tray {
    align-items: center;
    gap: 4px;
    width: 51px;
    margin-right: 0;
    padding-left: 3px;
    border: 1px solid #555;
    background: #999;
}

.resize {
    margin-top: 5px;
}
```
FILE: scene.js
```js
// SE isometric view: camera 35.264 degrees above the horizon
const TILT = 35.264 * Math.PI / 180;

function project(cx, cy, r, lat, lon) {
    const a = lat * Math.PI / 180;
    const b = lon * Math.PI / 180;
    const front = Math.cos(a) * Math.cos(b);
    return {
        x: cx + r * Math.cos(a) * Math.sin(b),
        y: cy - r * (Math.sin(a) * Math.cos(TILT) - front * Math.sin(TILT)),
        visible: Math.sin(a) * Math.sin(TILT) + front * Math.cos(TILT) > -0.02
    };
}

function line(points) {
    let d = '';
    for (let i = 1; i < points.length; i++) {
        const p = points[i - 1], q = points[i];
        if (p.visible && q.visible) {
            d += `M${p.x.toFixed(1)} ${p.y.toFixed(1)}L${q.x.toFixed(1)} ${q.y.toFixed(1)}`;
        }
    }
    return d;
}

function sphere(id, cx, cy, r, lats, lons, latStep, lonStep) {
    let d = '';
    lats.forEach(lat => {
        const points = [];
        for (let lon = -180; lon <= 180; lon += lonStep) points.push(project(cx, cy, r, lat, lon));
        d += line(points);
    });
    lons.forEach(lon => {
        const points = [];
        for (let lat = -90; lat <= 90; lat += latStep) points.push(project(cx, cy, r, lat, lon));
        d += line(points);
    });
    // silhouette, two rings so the rim reads thicker than the isolines
    [r, r - 0.6].forEach(rim => {
        for (let i = 0; i <= 32; i++) {
            const t = i * Math.PI / 16;
            d += (i ? 'L' : 'M') + (cx + rim * Math.cos(t)).toFixed(1) + ' ' + (cy + rim * Math.sin(t)).toFixed(1);
        }
    });
    document.getElementById(id).setAttribute('d', d);
}

function range(from, to, step) {
    const list = [];
    for (let v = from; v <= to; v += step) list.push(v);
    return list;
}

sphere('solidSphere', 197, 342.5, 63.5, [0, 45], [-135, -45, 45, 135], 5, 5);
sphere('meshSphere', 556, 342.5, 64, range(-78.75, 78.75, 11.25), range(-180, 157.5, 22.5), 11.25, 22.5);
```
